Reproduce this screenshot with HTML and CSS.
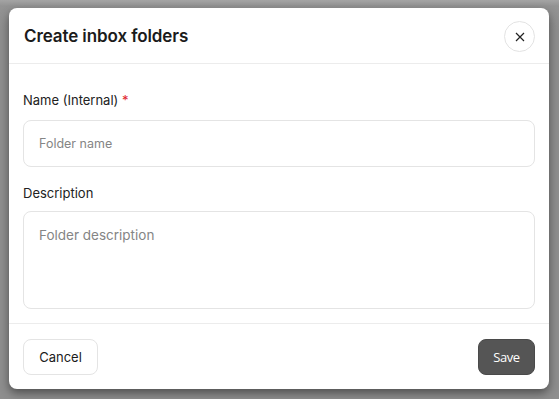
FILE: index.html
```html
<!DOCTYPE html>
<html lang="en">
    <head>
        <meta charset="utf-8"/>
        <title>Create inbox folders</title>
        <link rel="stylesheet" href="styles.css">
    </head>
    <body>
        <div class="backdrop">
            <div class="dialog">
                <div class="dialogHead">
                    <h2 class="dialogTitle">Create inbox folders</h2>
                    <button class="closeBtn" aria-label="Close">
                        <svg width="10" height="10" viewBox="0 0 10 10">
                            <path d="M1 1 L9 9 M9 1 L1 9" stroke="#222" stroke-width="1.2" fill="none"/>
                        </svg>
                    </button>
                </div>

                <div class="dialogBody">
                    <label class="fieldLabel">Name (Internal) <span class="req">*</span></label>
                    <input class="textInput" type="text" placeholder="Folder name">

                    <label class="fieldLabel descLabel">Description</label>
                    <textarea class="textArea" placeholder="Folder description"></textarea>
                </div>

                <div class="dialogFoot">
                    <button class="btn btnCancel">Cancel</button>
                    <button class="btn btnSave">Save</button>
                </div>
            </div>
        </div>
    </body>
</html>
```

FILE: styles.css
```css
html, body {
    margin: 0;
    height: 100%;
}

body {
    font-family: Inter, "Noto Sans", sans-serif;
    background: #8e8e8e;
}

.backdrop {
    height: 100%;
    box-sizing: border-box;
    padding: 8px 10px 10px 9px;
    background: linear-gradient(#a4a4a4 0, #939393 6px, #8e8e8e 30px);
}

.dialog {
    background: #ffffff;
    border-radius: 8px;
    height: 381px;
    display: flex;
    flex-direction: column;
    box-shadow: 0 4px 10px rgba(0, 0, 0, 0.45);
}

.dialogHead {
    height: 55px;
    display: flex;
    align-items: center;
    justify-content: space-between;
    padding: 0 14px 0 15px;
    border-bottom: 1px solid #ececec;
}

.dialogTitle {
    margin: 0;
    font-size: 17px;
    font-weight: 600;
    color: #1b1b1b;
    letter-spacing: -0.1px;
}

.closeBtn {
    width: 31px;
    height: 31px;
    border-radius: 50%;
    border: 1px solid #e3e3e3;
    background: #fff;
    display: flex;
    align-items: center;
    justify-content: center;
    padding: 0;
    margin-top: 2px;
}

.dialogBody {
    display: flex;
    flex-direction: column;
    padding: 27px 14px 14px 14px;
    border-bottom: 1px solid #ececec;
}

.fieldLabel {
    font-size: 13px;
    line-height: 18px;
    color: #222;
    margin-bottom: 11px;
}

.descLabel {
    margin-top: 17px;
    margin-bottom: 9px;
}

.req {
    color: #e0242b;
}

.textInput,
.textArea {
    font-family: Inter, "Noto Sans", sans-serif;
    border: 1.5px solid #e4e4e4;
    border-radius: 8px;
    background: #fff;
    outline: none;
    box-sizing: border-box;
    width: 100%;
    color: #222;
}

.textInput {
    height: 47px;
    padding: 0 15px;
    font-size: 12.5px;
}

.textArea {
    height: 98px;
    padding: 15px 15px;
    font-size: 13.5px;
    resize: none;
}

.textInput::placeholder,
.textArea::placeholder {
    color: #858585;
}

.dialogFoot {
    flex: 1;
    display: flex;
    align-items: center;
    justify-content: space-between;
    padding: 0 14px;
}

.btn {
    height: 36px;
    border-radius: 8px;
    font-size: 13px;
    cursor: pointer;
}

.btnCancel {
    font-family: Inter, "Noto Sans", sans-serif;
    width: 75px;
    background: #fff;
    border: 1px solid #e4e4e4;
    color: #1b1b1b;
}

.btnSave {
    font-family: "Open Sans", sans-serif;
    font-weight: 500;
    width: 57px;
    background: #555555;
    border: 1px solid #4a4a4a;
    color: #fff;
    letter-spacing: -0.4px;
}
```
